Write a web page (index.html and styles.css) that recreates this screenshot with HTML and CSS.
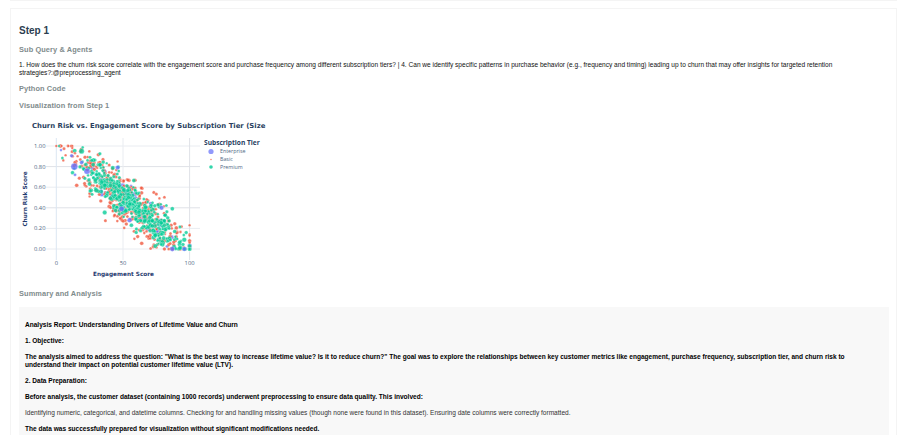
FILE: index.html
```html
<!DOCTYPE html>
<html lang="en">
<head>
<meta charset="utf-8">
<title>Step 1</title>
<link rel="stylesheet" href="styles.css">
</head>
<body>
<div class="prev-card"></div>
<main class="card">
  <h2 class="step">Step 1</h2>
  <h3 class="label">Sub Query &amp; Agents</h3>
  <p class="query">1. How does the churn risk score correlate with the engagement score and purchase frequency among different subscription tiers? | 4. Can we identify specific patterns in purchase behavior (e.g., frequency and timing) leading up to churn that may offer insights for targeted retention strategies?:@preprocessing_agent</p>
  <h3 class="label">Python Code</h3>
  <h3 class="label">Visualization from Step 1</h3>
  <svg class="chart" id="chart" width="260" height="170" viewBox="0 0 260 170" xmlns="http://www.w3.org/2000/svg">
    <text class="chart-title" x="13" y="12.5">Churn Risk vs. Engagement Score by Subscription Tier (Size</text>
    <g class="grid">
      <line x1="27" x2="181" y1="31" y2="31"/>
      <line class="heavy" x1="27" x2="181" y1="51.6" y2="51.6"/>
      <line x1="27" x2="181" y1="72.2" y2="72.2"/>
      <line class="heavy" x1="27" x2="181" y1="92.8" y2="92.8"/>
      <line x1="27" x2="181" y1="113.4" y2="113.4"/>
      <line x1="27" x2="181" y1="134" y2="134"/>
      <line x1="104" x2="104" y1="23" y2="145"/>
      <line class="heavy" x1="170.6" x2="170.6" y1="23" y2="145"/>
    </g>
    <line class="zero" x1="37.3" x2="37.3" y1="23" y2="145"/>
    <g id="points"></g>
    <g class="tick" text-anchor="end">
      <text x="26.5" y="33">1.00</text>
      <text x="26.5" y="53.6">0.80</text>
      <text x="26.5" y="74.2">0.60</text>
      <text x="26.5" y="94.8">0.40</text>
      <text x="26.5" y="115.4">0.20</text>
      <text x="26.5" y="136">0.00</text>
    </g>
    <g class="tick" text-anchor="middle">
      <text x="37.3" y="150">0</text>
      <text x="104" y="150">50</text>
      <text x="170.6" y="150">100</text>
    </g>
    <text class="axis-title" x="104.5" y="161" text-anchor="middle">Engagement Score</text>
    <text class="axis-title" transform="translate(7.5 84) rotate(-90)" text-anchor="middle">Churn Risk Score</text>
    <text class="legend-title" x="185" y="30">Subscription Tier</text>
    <circle cx="192" cy="36.5" r="2.6" fill="#636efa" fill-opacity=".7"/>
    <circle cx="192" cy="44.5" r=".8" fill="#ef553b" fill-opacity=".7"/>
    <circle cx="192" cy="52" r="1.8" fill="#00cc96" fill-opacity=".8"/>
    <g class="tick legend-text">
      <text x="201" y="38.2">Enterprise</text>
      <text x="201" y="46.2">Basic</text>
      <text x="201" y="54">Premium</text>
    </g>
  </svg>
  <h3 class="label summary">Summary and Analysis</h3>
  <section class="report">
    <p class="strong first">Analysis Report: Understanding Drivers of Lifetime Value and Churn</p>
    <p class="strong">1. Objective:</p>
    <p class="strong">The analysis aimed to address the question: "What is the best way to increase lifetime value? Is it to reduce churn?" The goal was to explore the relationships between key customer metrics like engagement, purchase frequency, subscription tier, and churn risk to understand their impact on potential customer lifetime value (LTV).</p>
    <p class="strong">2. Data Preparation:</p>
    <p class="strong">Before analysis, the customer dataset (containing 1000 records) underwent preprocessing to ensure data quality. This involved:</p>
    <p class="plain">Identifying numeric, categorical, and datetime columns. Checking for and handling missing values (though none were found in this dataset). Ensuring date columns were correctly formatted.</p>
    <p class="strong">The data was successfully prepared for visualization without significant modifications needed.</p>
  </section>
</main>
<script src="script.js"></script>
</body>
</html>
```
FILE: styles.css
```css
html, body {
  margin: 0;
  height: 435px;
  overflow: hidden;
  background: #fff;
  font-family: "Liberation Sans", Arial, sans-serif;
}
.prev-card {
  height: 1px;
  margin: 0 3px 0 10px;
  background: #f4f4f4;
}
.card {
  margin: 7px 3px 0 10px;
  padding: 16px 7px 0 8px;
  border: 1px solid #f4f4f4;
  border-bottom: 0;
}
.step {
  margin: 0;
  font-size: 10px;
  line-height: 12px;
  font-weight: 700;
  color: #2c3e50;
}
.label {
  margin: 7px 0 0;
  font-size: 7.4px;
  line-height: 12px;
  font-weight: 700;
  color: #7f8c8d;
  letter-spacing: .1px;
}
.query {
  margin: 5px 0 0;
  font-size: 6.55px;
  line-height: 8px;
  color: #111;
}
.query + .label { margin-top: 6px; }
.label + .label { margin-top: 4.5px; }
.chart {
  display: block;
  margin: 3.5px 0 0;
}
.label.summary { margin-top: 3px; }
.report {
  margin-top: 6.5px;
  padding: 14px 14px 0 6px;
  background: #f8f8f8;
  min-height: 140px;
}
.report p {
  margin: 0 0 8px;
  font-size: 6.55px;
  line-height: 8px;
  color: #111;
}
.report .strong { font-weight: 700; color: #000; }
.report .plain { color: #333; }
.grid line { stroke: #e9ecf1; stroke-width: 1; }
.grid .heavy { stroke: #dfe2e7; }
.zero { stroke: #dbe6f2; stroke-width: 1; }
.chart text { font-family: "Open Sans", "DejaVu Sans", sans-serif; }
.chart .chart-title {
  font-family: "DejaVu Sans", sans-serif;
  font-size: 6.9px;
  font-weight: 700;
  fill: #2a3f5f;
}
.chart .axis-title {
  font-family: "DejaVu Sans", sans-serif;
  font-size: 5.75px;
  font-weight: 700;
  fill: #1f3a6e;
}
.chart .legend-title {
  font-family: "Open Sans", sans-serif;
  font-size: 6.6px;
  font-weight: 700;
  fill: #2a3f5f;
}
.tick text { font-size: 5.8px; fill: #506784; }
.legend-text text { font-size: 5.3px; }
#points circle { stroke: #fff; stroke-width: .25; }
```
FILE: script.js
```js
(function () {
  var svg = "http://www.w3.org/2000/svg";
  var group = document.getElementById("points");
  var colors = { E: "#636efa", B: "#ef553b", P: "#00cc96" };
  var seed = 20240611;
  function rnd() {
    seed = (seed * 1664525 + 1013904223) >>> 0;
    return seed / 4294967296;
  }
  function normal() {
    return (rnd() + rnd() + rnd() + rnd() - 2) * 1.73;
  }
  function dot(x, y, r, tier) {
    var c = document.createElementNS(svg, "circle");
    c.setAttribute("cx", (37.3 + x * 1.333).toFixed(1));
    c.setAttribute("cy", (134 - y * 103).toFixed(1));
    c.setAttribute("r", r.toFixed(1));
    c.setAttribute("fill", colors[tier]);
    c.setAttribute("fill-opacity", "0.78");
    group.appendChild(c);
  }
  function clamp(v, lo, hi) {
    return Math.max(lo, Math.min(hi, v));
  }
  var order = [];
  for (var i = 0; i < 900; i++) {
    var t = rnd();
    order.push(t < 0.05 ? "E" : t < 0.48 ? "B" : "P");
  }
  // Plotly draws each trace in turn: enterprise, then basic, then premium on top.
  ["E", "B", "P"].forEach(function (tier) {
    order.forEach(function (o) {
      if (o !== tier) return;
      var x = clamp(56 + normal() * (tier === "B" ? 22 : 18), 3, 100);
      var noise = tier === "B" ? 0.125 : 0.095;
      var y = clamp(1.0 - x * 0.0101 + normal() * noise, 0, 1);
      var r = tier === "B" ? 1.3 + rnd() * 0.6 : tier === "P" ? 1.3 + rnd() * 0.9 : 1.5 + rnd();
      dot(x, y, r, tier);
    });
  });
  var fixed = [
    [0, 1, 1.3, "B"], [2, 1, 1.3, "P"], [4, 1, 1.3, "B"], [9, 1, 1.3, "B"], [12, 1, 1.3, "B"],
    [3.5, .96, 1.3, "E"], [12, .98, 1.3, "B"], [7, .91, 1.3, "B"], [11.5, .905, 1.8, "E"],
    [19, .95, 2.6, "P"], [14, .93, 1.3, "B"], [16, .9, 1.3, "B"],
    [13.5, .8, 3.4, "E"], [19, .84, 2, "E"], [23, .755, 3, "E"], [14, .72, 1.5, "E"],
    [46, .79, 2.2, "E"], [46, .85, 1.3, "B"], [87, .0, 2.4, "E"], [96, .0, 2.2, "E"],
    [100, .23, 1.3, "B"], [100, .13, 1.3, "B"], [100, .03, 2, "P"], [100, 0, 1.5, "P"],
    [87, .39, 2, "P"], [79, .4, 2.2, "E"], [96, .09, 2.3, "P"], [49, .39, 2.6, "E"],
    [55, .28, 2.4, "E"], [30, .57, 2.4, "P"], [25, .51, 1.3, "B"]
  ];
  fixed.forEach(function (p) { dot(p[0], p[1], p[2], p[3]); });
})();
```
